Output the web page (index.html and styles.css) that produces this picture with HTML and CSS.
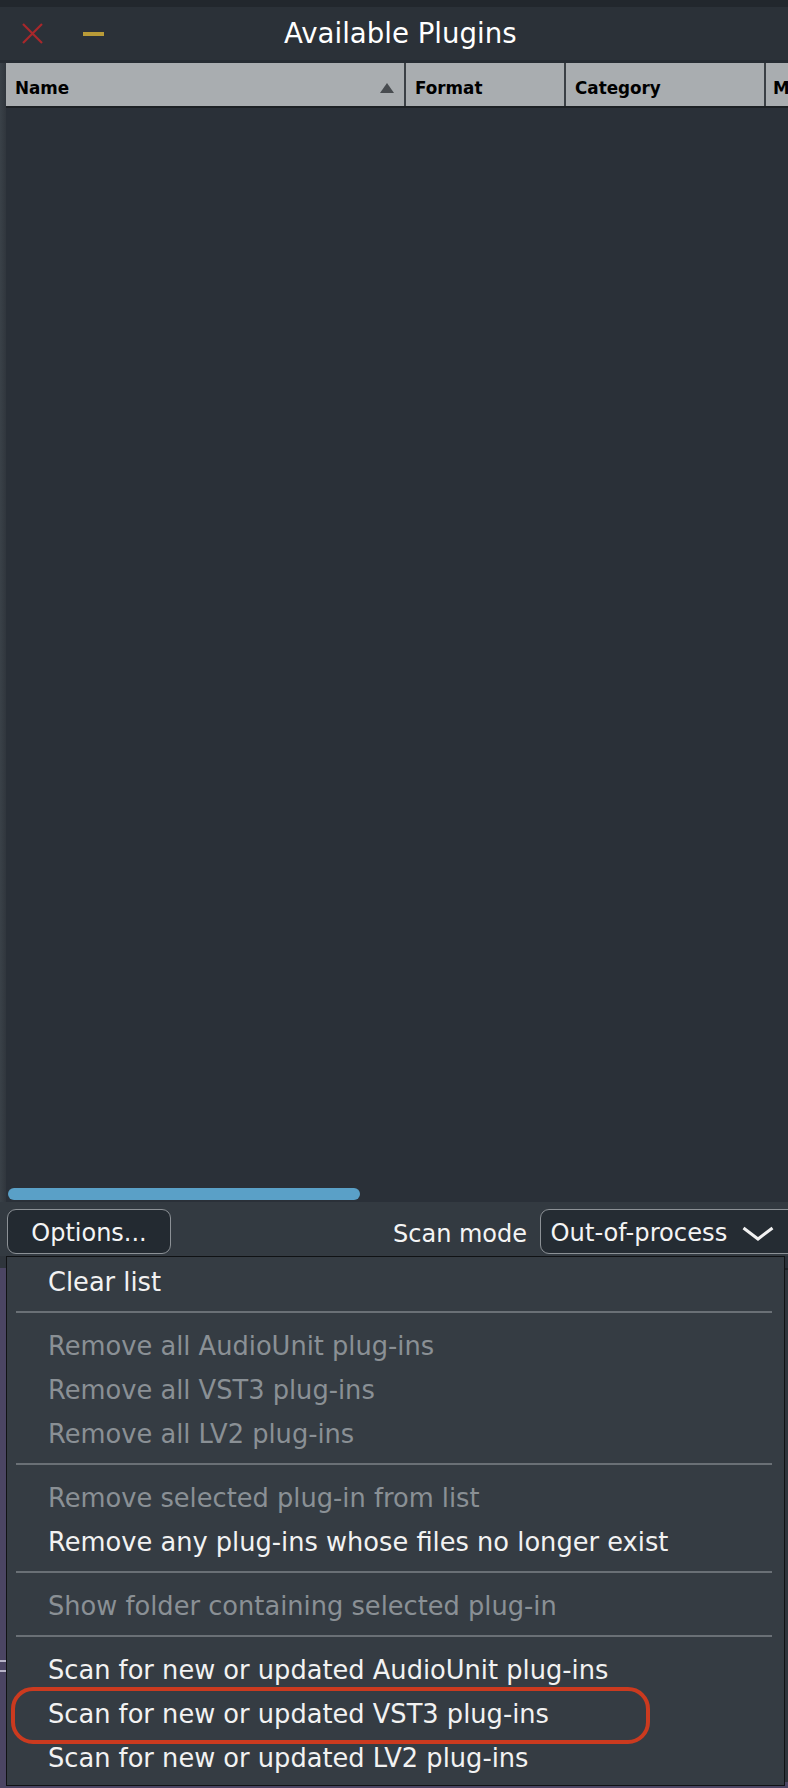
FILE: index.html
```html
<!DOCTYPE html>
<html>
<head>
<meta charset="utf-8">
<link rel="stylesheet" href="styles.css">
</head>
<body>
<div class="window">
  <div class="topstrip"></div>
  <div class="titlebar">
    <svg class="close" width="21" height="21" viewBox="0 0 21 21"><path d="M1 1L20 20M20 1L1 20" stroke="#a8282b" stroke-width="2.2" fill="none"/></svg>
    <svg class="minimize" width="21" height="4" viewBox="0 0 21 4"><rect width="21" height="4" fill="#b99b38"/></svg>
    <span class="title">Available Plugins</span>
  </div>
  <div class="gap"></div>
  <div class="main">
    <div class="list">
      <div class="header">
        <div class="col col-name"><span>Name</span><svg class="sort" width="14" height="10" viewBox="0 0 14 10"><path d="M7 0L14 10H0Z" fill="#484c50"/></svg></div>
        <div class="col col-format">Format</div>
        <div class="col col-category">Category</div>
        <div class="col col-more">M</div>
      </div>
      <div class="rows"><div class="hscroll"></div></div>
    </div>
  </div>
  <div class="controls">
    <div class="btn">Options...</div>
    <div class="label">Scan mode</div>
    <div class="combo"><span class="combo-text">Out-of-process</span><svg class="chevron" width="32" height="15" viewBox="0 0 32 15"><path d="M1.5 2L16 13L30.5 2" stroke="#f2f2f2" stroke-width="3" fill="none"/></svg></div>
  </div>
</div>
<div class="desktop">
  <div class="edge-left"></div>
  <div class="menu">
    <div class="item">Clear list</div>
    <div class="sep"><div class="sep-line"></div></div>
    <div class="item disabled">Remove all AudioUnit plug-ins</div>
    <div class="item disabled">Remove all VST3 plug-ins</div>
    <div class="item disabled">Remove all LV2 plug-ins</div>
    <div class="sep"><div class="sep-line"></div></div>
    <div class="item disabled">Remove selected plug-in from list</div>
    <div class="item">Remove any plug-ins whose files no longer exist</div>
    <div class="sep"><div class="sep-line"></div></div>
    <div class="item disabled">Show folder containing selected plug-in</div>
    <div class="sep"><div class="sep-line"></div></div>
    <div class="item">Scan for new or updated AudioUnit plug-ins</div>
    <div class="item">Scan for new or updated VST3 plug-ins</div>
    <div class="item">Scan for new or updated LV2 plug-ins</div>
    <div class="ring"></div>
  </div>
  <div class="edge-right"></div>
</div>
</body>
</html>
```

FILE: styles.css
```css
html, body {
  margin: 0;
  padding: 0;
}
body {
  width: 788px;
  height: 1788px;
  overflow: hidden;
  background: #4b4563;
  font-family: "DejaVu Sans", sans-serif;
  color: #f2f2f2;
}
.window {
  width: 788px;
  overflow: hidden;
}
.topstrip {
  height: 7px;
  background: #22272d;
}
.titlebar {
  height: 53px;
  background: #2b3138;
  display: flex;
  align-items: center;
  white-space: nowrap;
}
.close {
  margin-left: 22px;
  flex-shrink: 0;
}
.minimize {
  margin-left: 40px;
  flex-shrink: 0;
}
.title {
  margin-left: 180px;
  font-size: 27.6px;
  line-height: 53px;
  color: #ffffff;
}
.gap {
  height: 3px;
  background: #262c33;
}
.main {
  background: linear-gradient(to right, #3a4148, #30363d 6px);
  padding-left: 6px;
}
.list {
  display: flex;
  flex-direction: column;
  background: #2a3038;
}
.header {
  display: flex;
  height: 43px;
  background: #a9adb0;
  border-bottom: 2px solid #1c2024;
  white-space: nowrap;
  overflow: hidden;
}
.col {
  box-sizing: border-box;
  height: 43px;
  padding-top: 6px;
  padding-left: 9px;
  display: flex;
  align-items: center;
  border-right: 2px solid #3b4045;
  font-weight: bold;
  font-size: 16.8px;
  line-height: 20px;
  color: #000000;
  flex-shrink: 0;
}
.col-name {
  width: 400px;
  justify-content: space-between;
  padding-right: 10px;
}
.col-format {
  width: 160px;
}
.col-category {
  width: 200px;
}
.col-more {
  flex: 1;
  border-right: none;
  padding-left: 7px;
}
.rows {
  height: 1094px;
  box-sizing: border-box;
  display: flex;
  flex-direction: column;
  justify-content: flex-end;
  padding-bottom: 2px;
}
.hscroll {
  width: 352px;
  height: 12px;
  margin-left: 2px;
  border-radius: 6px;
  background: #5aa0c7;
}
.controls {
  height: 54px;
  box-sizing: border-box;
  padding-top: 7px;
  display: flex;
  align-items: flex-start;
  background: #333a41;
  white-space: nowrap;
}
.btn {
  margin-left: 7px;
  width: 164px;
  height: 45px;
  box-sizing: border-box;
  flex-shrink: 0;
  border: 1.5px solid #8c9196;
  border-radius: 9px;
  background: #232a31;
  font-size: 24px;
  padding-top: 4px;
  line-height: 38px;
  text-align: center;
  color: #f4f4f4;
}
.label {
  margin-left: 222px;
  flex-shrink: 0;
  font-size: 24px;
  padding-top: 5.5px;
  line-height: 38px;
  color: #f4f4f4;
}
.combo {
  margin-left: 13px;
  width: 280px;
  height: 45px;
  flex-shrink: 0;
  box-sizing: border-box;
  border: 1.5px solid #8c9196;
  border-radius: 9px;
  background: #252c33;
  display: flex;
  align-items: flex-start;
  padding-left: 9.5px;
}
.combo-text {
  font-size: 24.2px;
  padding-top: 4px;
  line-height: 38px;
  color: #f4f4f4;
}
.chevron {
  margin-left: 15px;
  margin-top: 16px;
  flex-shrink: 0;
}
.desktop {
  display: flex;
  height: 532px;
}
.edge-left {
  width: 6px;
  flex-shrink: 0;
  background: linear-gradient(to bottom, #2f353c 0 12px, #4b4563 12px 404px, #b8b4c8 404px 406px, #4b4563 406px 414px, #b8b4c8 414px 416px, #4b4563 416px);
}
.menu {
  position: relative;
  width: 779px;
  height: 530px;
  flex-shrink: 0;
  box-sizing: border-box;
  border: 1px solid #101214;
  background: #353c43;
}
.edge-right {
  flex: 1;
  background: linear-gradient(to bottom, #2a3038 0 12px, #1d2227 12px 14px, #2f353c 14px 526px, #4b4563 526px);
}
.item {
  height: 44px;
  box-sizing: border-box;
  padding: 6px 0 0 41px;
  line-height: 38px;
  font-size: 25.7px;
  color: #f2f2f2;
  white-space: nowrap;
}
.item.disabled {
  color: #8a9095;
}
.sep {
  height: 20px;
  box-sizing: border-box;
  padding: 10px 12px 0 9px;
}
.sep-line {
  height: 2px;
  background: #6a7076;
}
.ring {
  position: absolute;
  left: 4px;
  top: 430px;
  width: 639px;
  height: 57px;
  box-sizing: border-box;
  border: 4px solid #cb3a1f;
  border-radius: 22px;
}
```
